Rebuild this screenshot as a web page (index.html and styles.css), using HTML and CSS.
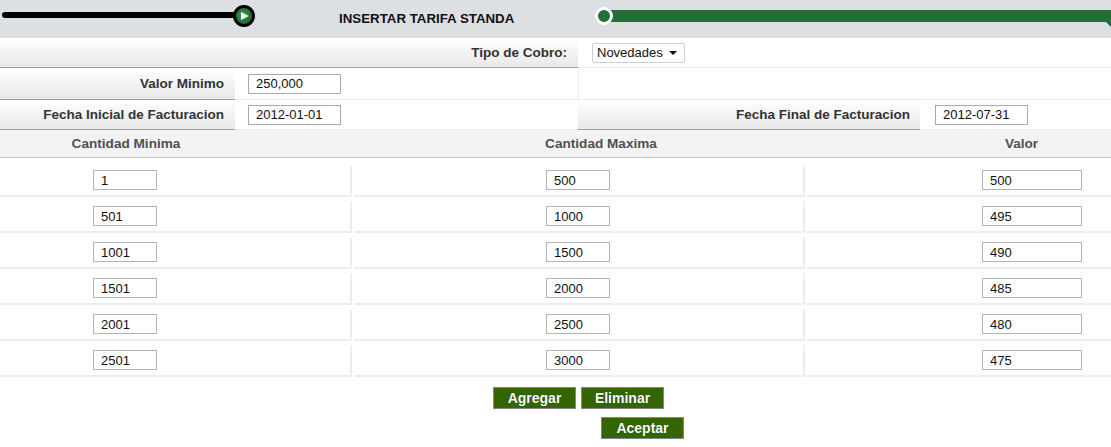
FILE: index.html
```html
<!DOCTYPE html>
<html lang="es">
<head>
<meta charset="utf-8">
<title>Insertar Tarifa Standard</title>
<link rel="stylesheet" href="styles.css">
</head>
<body>
<div class="topbar">
  <svg class="track-left" width="260" height="38" viewBox="0 0 260 38">
    <defs>
      <radialGradient id="knob" cx="0.45" cy="0.45" r="0.6">
        <stop offset="0" stop-color="#3f9a55"/>
        <stop offset="1" stop-color="#145a25"/>
      </radialGradient>
    </defs>
    <line x1="5" y1="15" x2="236" y2="15" stroke="#000" stroke-width="6" stroke-linecap="round"/>
    <circle cx="244" cy="16" r="9.5" fill="url(#knob)" stroke="#000" stroke-width="3"/>
    <polygon points="241,12 241,20 248.5,16" fill="#fff"/>
  </svg>
  <div class="title">INSERTAR TARIFA STANDA</div>
  <svg class="track-right" width="519" height="38" viewBox="0 0 519 38">
    <polygon points="18,10 506,10 519,10 519,27 514,22 18,22" fill="#236f38"/>
    <circle cx="12" cy="16" r="7.5" fill="#236f38" stroke="#fff" stroke-width="3"/>
  </svg>
</div>

<div class="form">
  <div class="lbl span2">Tipo de Cobro:</div>
  <div class="fld span2 selcell">
    <div class="select"><span>Novedades</span><span class="caret"></span></div>
  </div>

  <div class="lbl">Valor Minimo</div>
  <div class="fld"><input class="txt" type="text" value="250,000"></div>
  <div class="fld span2 blank"></div>

  <div class="lbl">Fecha Inicial de Facturacion</div>
  <div class="fld"><input class="txt" type="text" value="2012-01-01"></div>
  <div class="lbl lbl-right">Fecha Final de Facturacion</div>
  <div class="fld fld-right"><input class="txt" type="text" value="2012-07-31"></div>
</div>

<div class="thead">
  <div class="th">Cantidad Minima</div>
  <div class="th">Cantidad Maxima</div>
  <div class="th th-valor">Valor</div>
</div>

<div class="rows">
  <div class="row"><div class="cell ca"><input class="num" value="1"></div><div class="cell cb"><input class="num" value="500"></div><div class="cell cc"><input class="num wide" value="500"></div></div>
  <div class="row"><div class="cell ca"><input class="num" value="501"></div><div class="cell cb"><input class="num" value="1000"></div><div class="cell cc"><input class="num wide" value="495"></div></div>
  <div class="row"><div class="cell ca"><input class="num" value="1001"></div><div class="cell cb"><input class="num" value="1500"></div><div class="cell cc"><input class="num wide" value="490"></div></div>
  <div class="row"><div class="cell ca"><input class="num" value="1501"></div><div class="cell cb"><input class="num" value="2000"></div><div class="cell cc"><input class="num wide" value="485"></div></div>
  <div class="row"><div class="cell ca"><input class="num" value="2001"></div><div class="cell cb"><input class="num" value="2500"></div><div class="cell cc"><input class="num wide" value="480"></div></div>
  <div class="row"><div class="cell ca"><input class="num" value="2501"></div><div class="cell cb"><input class="num" value="3000"></div><div class="cell cc"><input class="num wide" value="475"></div></div>
</div>

<div class="actions">
  <div class="btnrow first">
    <button class="btn">Agregar</button>
    <button class="btn">Eliminar</button>
  </div>
  <div class="btnrow second">
    <button class="btn">Aceptar</button>
  </div>
</div>
</body>
</html>
```

FILE: styles.css
```css
* { box-sizing: border-box; }
html, body { margin: 0; padding: 0; background: #fff; }
body {
  font-family: "Liberation Sans", Arial, sans-serif;
  font-size: 13px;
  color: #333;
  width: 1111px;
  overflow: hidden;
}

/* top bar */
.topbar {
  height: 38px;
  background: #dde0e3;
  display: flex;
  align-items: flex-start;
}
.track-left { display: block; flex: none; }
.title {
  margin-left: 79px;
  margin-top: 11px;
  font-size: 13.3px;
  font-weight: bold;
  color: #111;
  white-space: nowrap;
}
.track-right { display: block; margin-left: auto; flex: none; }

/* top form */
.form {
  display: grid;
  grid-template-columns: 235px 343px 342px 1fr;
  grid-template-rows: 30px 32px 30px;
}
.span2 { grid-column: span 2; }
.lbl {
  background: linear-gradient(#ffffff, #e8e8e8);
  border-bottom: 1px solid #a3a3a3;
  padding-right: 11px;
  font-weight: bold;
  font-size: 13.5px;
  color: #333;
  display: flex;
  align-items: center;
  justify-content: flex-end;
  white-space: nowrap;
}
.lbl-right { padding-right: 10px; }
.fld {
  background: #fff;
  border-bottom: 1px solid #ececec;
  display: flex;
  align-items: center;
  padding-left: 13px;
}
.fld-right { padding-left: 15px; }
.blank { border-left: 1px solid #ececec; }
.selcell { padding-left: 14px; }
.txt {
  width: 93px;
  height: 20px;
  border: 1px solid #a9a9a9;
  padding: 0 0 0 7px;
  font-family: "Liberation Sans", Arial, sans-serif;
  font-size: 13px;
  color: #111;
  margin: 0;
  outline: none;
}
.select {
  width: 93px;
  height: 20px;
  border: 1px solid #cfcfcf;
  border-radius: 2px;
  background: #fff;
  display: flex;
  align-items: center;
  justify-content: space-between;
  padding: 0 7px 0 4px;
  color: #111;
  font-size: 13px;
}
.caret {
  width: 0;
  height: 0;
  border-left: 4px solid transparent;
  border-right: 4px solid transparent;
  border-top: 4px solid #111;
}

/* table header */
.thead {
  display: grid;
  grid-template-columns: 252px 698px 1fr;
  height: 28px;
  background: #f3f3f3;
  border-bottom: 1px solid #c9c9c9;
  align-items: center;
}
.th {
  text-align: center;
  font-weight: bold;
  font-size: 13.6px;
  color: #505050;
}
.th-valor { padding-right: 18px; }

/* data rows */
.rows { padding-top: 3px; }
.row {
  display: grid;
  grid-template-columns: 352px 451px 1fr;
  column-gap: 2px;
  padding-top: 4px;
}
.cell {
  height: 32px;
  border-right: 2px solid #ededed;
  border-bottom: 2px solid #ededed;
  display: flex;
  align-items: flex-start;
  padding-top: 5px;
}
.ca { padding-left: 93px; }
.cb { padding-left: 192px; }
.cc { padding-left: 175px; border-right: none; }
.num {
  width: 64px;
  height: 20px;
  border: 1px solid #b5b5b5;
  padding: 0 0 0 7px;
  margin: 0;
  font-family: "Liberation Sans", Arial, sans-serif;
  font-size: 13px;
  color: #111;
  outline: none;
}
.num.wide { width: 100px; }

/* buttons */
.actions { padding-top: 10px; }
.btnrow { display: flex; gap: 5px; }
.btnrow.first { padding-left: 493px; }
.btnrow.second { padding-left: 601px; margin-top: 8px; }
.btn {
  width: 83px;
  height: 22px;
  margin: 0;
  padding: 0;
  background: #336600;
  border: 1px solid #858585;
  color: #fff;
  font-family: "Liberation Sans", Arial, sans-serif;
  font-weight: bold;
  font-size: 14px;
  text-shadow: 0 0 1px #0c2a00;
  cursor: pointer;
}
```
